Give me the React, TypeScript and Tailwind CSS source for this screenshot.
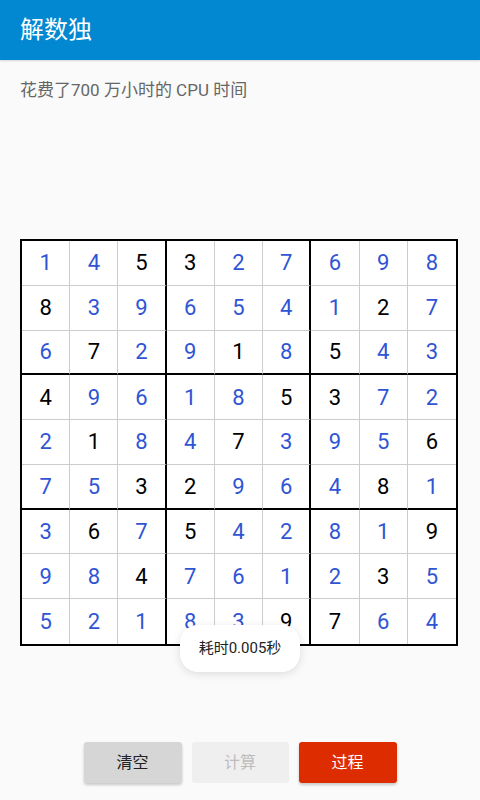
import React from "react"

const board = [
  "145327698",
  "839654127",
  "672918543",
  "496185372",
  "218473956",
  "753296481",
  "367542819",
  "984761235",
  "521839764",
]

// givens are drawn black, solved cells blue
const givens = [
  "001100000",
  "100000010",
  "010010100",
  "100001100",
  "010010001",
  "001100010",
  "010100001",
  "001000010",
  "000001100",
]

export default function App() {
  return (
    <div
      className="relative w-[480px] h-[800px] bg-[#fafafa] flex flex-col overflow-hidden"
      style={{ fontFamily: "Roboto, 'Noto Sans CJK SC', sans-serif" }}
    >
      {/* App bar */}
      <div className="h-[60px] bg-[#0288d1] flex items-center px-5 shadow-[0_1px_2px_rgba(0,0,0,0.15)]">
        <span className="text-white text-[24px] leading-none">解数独</span>
      </div>

      <p className="mt-[20px] px-5 text-[17px] leading-5 text-[#666666]">花费了700 万小时的 CPU 时间</p>

      {/* Board */}
      <div className="relative mt-[139px] mx-5">
        <div className="w-[438px] h-[407px] border-2 border-black bg-white grid grid-cols-9 grid-rows-9">
          {board.map((row, r) =>
            row.split("").map((d, c) => {
              const right =
                c === 8 ? "" : c % 3 === 2 ? "border-r-2 border-r-black" : "border-r border-r-[#cccccc]"
              const bottom =
                r === 8 ? "" : r % 3 === 2 ? "border-b-2 border-b-black" : "border-b border-b-[#cccccc]"
              const color = givens[r][c] === "1" ? "text-black" : "text-[#2f55d4]"
              return (
                <div
                  key={`${r}-${c}`}
                  className={`flex items-center justify-center text-[22px] ${right} ${bottom} ${color}`}
                >
                  {d}
                </div>
              )
            })
          )}
        </div>

        {/* Toast */}
        <div className="absolute left-[160px] top-[386px] w-[120px] h-[47px] rounded-[18px] bg-white shadow-[0_2px_8px_rgba(0,0,0,0.12)] flex items-center justify-center text-[15px] text-[#222222]">
          耗时0.005秒
        </div>
      </div>

      {/* Actions */}
      <div className="mt-auto mb-[17px] flex justify-center gap-[10px]">
        <button className="w-[98px] h-[41px] rounded-[3px] bg-[#d6d6d6] text-[16px] text-[#222222] shadow-[0_2px_3px_rgba(0,0,0,0.2)]">
          清空
        </button>
        <button className="w-[97px] h-[41px] rounded-[3px] bg-[#efefef] text-[16px] text-[#bdbdbd]">
          计算
        </button>
        <button className="w-[98px] h-[41px] rounded-[3px] bg-[#dd2c00] text-[16px] text-white shadow-[0_2px_3px_rgba(0,0,0,0.2)]">
          过程
        </button>
      </div>
    </div>
  )
}
